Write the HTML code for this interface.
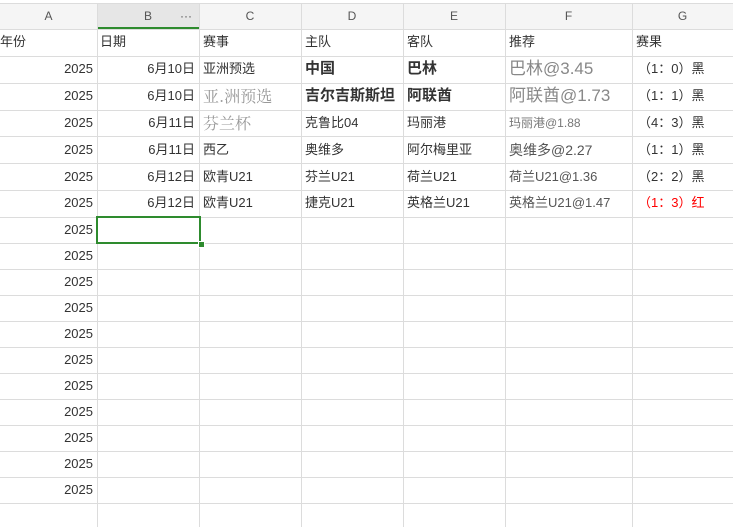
<!DOCTYPE html>
<html><head><meta charset="utf-8"><style>
body{margin:0;width:733px;height:527px;overflow:hidden;background:#fff;position:relative;font-family:"Liberation Sans","Noto Sans CJK SC",sans-serif;color:#333;font-size:13px}
.h{position:absolute;left:0;width:733px;height:1px;background:#dcdcdc}
.v{position:absolute;top:3px;width:1px;height:524px;background:#dcdcdc}
.t{position:absolute;height:26px;line-height:26px;white-space:nowrap;overflow:hidden}
.r{text-align:right}
.hd{position:absolute;top:4px;height:25px;line-height:25px;text-align:center;color:#555;font-size:12px}
.b{font-weight:bold;font-size:15px}
.s{font-family:"Noto Serif CJK SC",serif;color:#999;font-size:16px}
.g{color:#888;font-size:16px}
</style></head><body>
<div style="position:absolute;left:0;top:3px;width:733px;height:26px;background:#f5f5f5"></div>
<div style="position:absolute;left:97px;top:3px;width:102px;height:26px;background:#e6e6e6"></div>
<div style="position:absolute;left:97px;top:27px;width:103px;height:2px;background:#2e8b2e"></div>
<div class="h" style="top:3px"></div>
<div class="h" style="top:29px"></div>
<div class="h" style="top:56px"></div><div class="h" style="top:83px"></div><div class="h" style="top:110px"></div><div class="h" style="top:136px"></div><div class="h" style="top:163px"></div><div class="h" style="top:190px"></div><div class="h" style="top:217px"></div><div class="h" style="top:243px"></div><div class="h" style="top:269px"></div><div class="h" style="top:295px"></div><div class="h" style="top:321px"></div><div class="h" style="top:347px"></div><div class="h" style="top:373px"></div><div class="h" style="top:399px"></div><div class="h" style="top:425px"></div><div class="h" style="top:451px"></div><div class="h" style="top:477px"></div><div class="h" style="top:503px"></div>
<div class="v" style="left:97px"></div><div class="v" style="left:199px"></div><div class="v" style="left:301px"></div><div class="v" style="left:403px"></div><div class="v" style="left:505px"></div><div class="v" style="left:632px"></div>
<div class="hd" style="left:0;width:97px">A</div>
<div class="hd" style="left:97px;width:102px">B</div>
<div style="position:absolute;left:180px;top:4px;line-height:25px;font-size:12px;color:#555">···</div>
<div class="hd" style="left:199px;width:102px">C</div>
<div class="hd" style="left:301px;width:102px">D</div>
<div class="hd" style="left:403px;width:102px">E</div>
<div class="hd" style="left:505px;width:127px">F</div>
<div class="hd" style="left:632px;width:101px">G</div>

<div class="t" style="top:29px;left:0">年份</div>
<div class="t" style="top:29px;left:100px">日期</div>
<div class="t" style="top:29px;left:203px">赛事</div>
<div class="t" style="top:29px;left:305px">主队</div>
<div class="t" style="top:29px;left:407px">客队</div>
<div class="t" style="top:29px;left:509px">推荐</div>
<div class="t" style="top:29px;left:636px">赛果</div>

<div class="t r" style="top:56px;left:0;width:93px">2025</div>
<div class="t r" style="top:56px;left:97px;width:98px">6月10日</div>
<div class="t" style="top:56px;left:203px">亚洲预选</div>
<div class="t b" style="top:56px;left:305px">中国</div>
<div class="t b" style="top:56px;left:407px">巴林</div>
<div class="t g" style="top:56px;left:509px;font-size:17px">巴林@3.45</div>
<div class="t" style="top:56px;left:638px">（1：0）黑</div>

<div class="t r" style="top:83px;left:0;width:93px">2025</div>
<div class="t r" style="top:83px;left:97px;width:98px">6月10日</div>
<div class="t s" style="top:83px;left:203px;width:98px">亚.洲预选</div>
<div class="t b" style="top:83px;left:305px;width:98px">吉尔吉斯斯坦</div>
<div class="t b" style="top:83px;left:407px">阿联酋</div>
<div class="t g" style="top:83px;left:509px;font-size:17px">阿联酋@1.73</div>
<div class="t" style="top:83px;left:638px">（1：1）黑</div>

<div class="t r" style="top:110px;left:0;width:93px">2025</div>
<div class="t r" style="top:110px;left:97px;width:98px">6月11日</div>
<div class="t s" style="top:110px;left:203px">芬兰杯</div>
<div class="t" style="top:110px;left:305px">克鲁比04</div>
<div class="t" style="top:110px;left:407px">玛丽港</div>
<div class="t" style="top:110px;left:509px;font-size:12px;color:#777">玛丽港@1.88</div>
<div class="t" style="top:110px;left:638px">（4：3）黑</div>

<div class="t r" style="top:137px;left:0;width:93px">2025</div>
<div class="t r" style="top:137px;left:97px;width:98px">6月11日</div>
<div class="t" style="top:137px;left:203px">西乙</div>
<div class="t" style="top:137px;left:305px">奥维多</div>
<div class="t" style="top:137px;left:407px">阿尔梅里亚</div>
<div class="t" style="top:137px;left:509px;font-size:14px;color:#555">奥维多@2.27</div>
<div class="t" style="top:137px;left:638px">（1：1）黑</div>

<div class="t r" style="top:164px;left:0;width:93px">2025</div>
<div class="t r" style="top:164px;left:97px;width:98px">6月12日</div>
<div class="t" style="top:164px;left:203px">欧青U21</div>
<div class="t" style="top:164px;left:305px">芬兰U21</div>
<div class="t" style="top:164px;left:407px">荷兰U21</div>
<div class="t" style="top:164px;left:509px;color:#555">荷兰U21@1.36</div>
<div class="t" style="top:164px;left:638px">（2：2）黑</div>

<div class="t r" style="top:190px;left:0;width:93px">2025</div>
<div class="t r" style="top:190px;left:97px;width:98px">6月12日</div>
<div class="t" style="top:190px;left:203px">欧青U21</div>
<div class="t" style="top:190px;left:305px">捷克U21</div>
<div class="t" style="top:190px;left:407px">英格兰U21</div>
<div class="t" style="top:190px;left:509px;color:#555">英格兰U21@1.47</div>
<div class="t" style="top:190px;left:638px;color:#f00">（1：3）红</div>

<div class="t r" style="top:217px;left:0;width:93px">2025</div>
<div class="t r" style="top:243px;left:0;width:93px">2025</div>
<div class="t r" style="top:269px;left:0;width:93px">2025</div>
<div class="t r" style="top:295px;left:0;width:93px">2025</div>
<div class="t r" style="top:321px;left:0;width:93px">2025</div>
<div class="t r" style="top:347px;left:0;width:93px">2025</div>
<div class="t r" style="top:373px;left:0;width:93px">2025</div>
<div class="t r" style="top:399px;left:0;width:93px">2025</div>
<div class="t r" style="top:425px;left:0;width:93px">2025</div>
<div class="t r" style="top:451px;left:0;width:93px">2025</div>
<div class="t r" style="top:477px;left:0;width:93px">2025</div>

<div style="position:absolute;left:96px;top:216px;width:101px;height:24px;border:2px solid #2e8b2e"></div>
<div style="position:absolute;left:198px;top:241px;width:5px;height:5px;background:#2e8b2e;border:1px solid #fff"></div>
</body></html>
